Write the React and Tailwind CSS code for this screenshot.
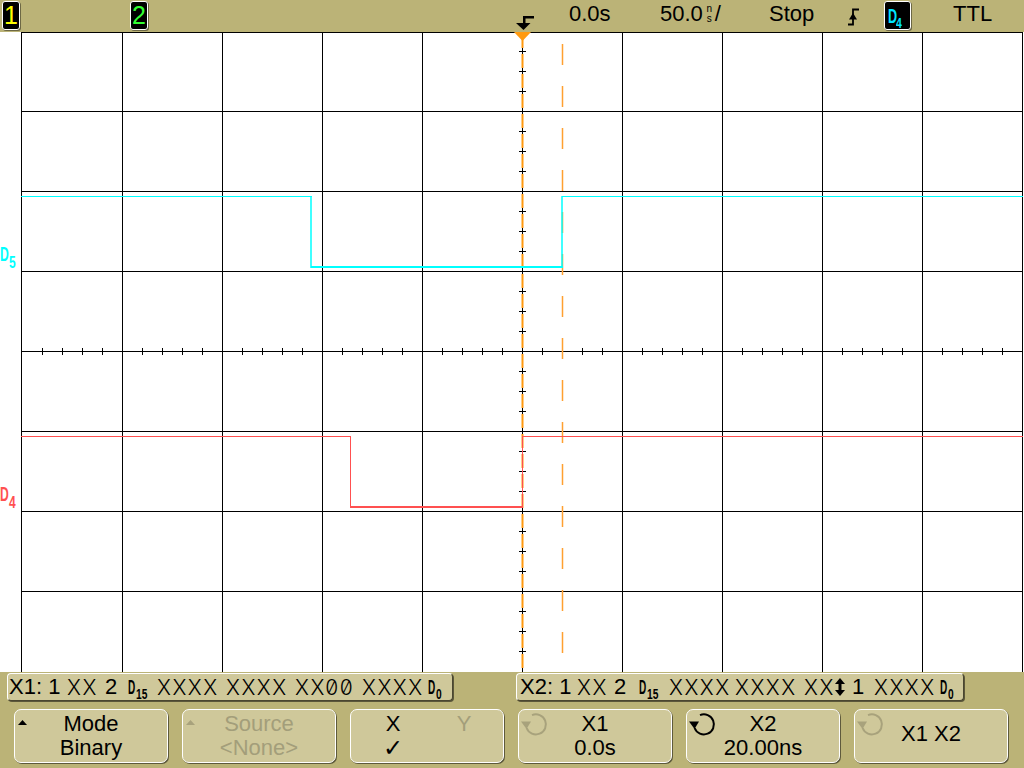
import React from 'react';

// scope display: top status bar, graticule with two digital traces, cursor bars and softkeys
const vLines = [21.5, 122.5, 222.5, 322.5, 422.5, 522.5, 622.5, 722.5, 822.5, 922.5, 1022.5];
const hLines = [32.5, 111.5, 191.5, 271.5, 351.5, 431.5, 511.5, 591.5];
const hTicks = Array.from({ length: 49 }, (_, i) => 42 + i * 20);
const vTicks = Array.from({ length: 31 }, (_, i) => 51 + i * 20);

const Badge = ({ children, color, className = '' }) => (
  <div className={`w-[18px] h-[29px] mt-[1px] rounded-[3px] border border-white bg-black shadow-[1px_1px_0_#6d6845] flex items-center justify-center text-[25px] leading-none ${color} ${className}`}>
    {children}
  </div>
);

// narrow pixel style "D" with subscript
const DSub = ({ n, subW = 12, className = '', dSize = 'text-[20px]', sSize = 'text-[15px]', dScale = 'scale-x-[0.5]', sScale = 'scale-x-[0.68]' }) => (
  <span className={`inline-flex items-end font-bold leading-none font-['Liberation_Sans',Arial,sans-serif] ${className}`}>
    <span className="inline-block w-[8px]">
      <span className={`inline-block origin-left ${dScale} ${dSize}`}>D</span>
    </span>
    <span className="inline-block translate-y-[5px]" style={{ width: subW }}>
      <span className={`inline-block origin-left ${sScale} ${sSize}`}>{n}</span>
    </span>
  </span>
);

const Thin = ({ children }) => (
  <span className="font-['Inter','DejaVu_Sans',sans-serif] font-light text-black tracking-[1.5px] text-[21px] [font-feature-settings:'zero']">{children}</span>
);

const UpDown = () => (
  <svg width="10" height="18" viewBox="0 0 10 18">
    <rect x="3.5" y="4" width="3" height="10" fill="black" />
    <polygon points="0,6 10,6 5,0" fill="black" />
    <polygon points="0,12 10,12 5,18" fill="black" />
  </svg>
);

const XBar = ({ cells, className = '', pl }) => (
  <div className={`h-[28px] rounded-[4px] border border-[#4a4630] border-t-white border-l-white shadow-[1px_1px_0_#5b573a] bg-[#cfc89a] flex items-center text-[22px] leading-none text-black ${className}`} style={{ paddingLeft: pl }}>
    {cells.map(([w, c], i) => (
      <div key={i} className="flex items-center shrink-0" style={{ width: w }}>{c}</div>
    ))}
  </div>
);

const Tri = ({ dim }) => (
  <svg width="10" height="7" viewBox="0 0 10 7" className="ml-[3px] mt-[9px]">
    <polygon points="0,6 9,6 4.5,1" fill={dim ? '#a8a27c' : 'black'} />
  </svg>
);

const Knob = ({ dim }) => {
  const c = dim ? '#a8a27c' : 'black';
  return (
    <svg width="30" height="26" viewBox="0 0 30 26" className="ml-[1px] mt-[2px]">
      <path d="M12 3.2 A10 10 0 1 1 6.6 16" fill="none" stroke={c} strokeWidth="2" />
      <polygon points="1,9.5 11,9.5 6.5,17" fill={c} />
    </svg>
  );
};

const SoftKey = ({ icon, children }) => (
  <div className="w-[154px] h-[54px] shrink-0 rounded-[7px] border border-white bg-[#cfc89a] shadow-[1px_1px_0_#5e5a3c] grid grid-cols-[30px_1fr_30px]">
    <div>{icon}</div>
    <div className="flex flex-col items-center justify-center text-[22px] leading-[24px]">{children}</div>
    <div />
  </div>
);

const Chart = () => (
  <svg width="1024" height="640" viewBox="0 32 1024 640" className="block bg-white">
    {vLines.map((x) => (
      <line key={'v' + x} x1={x} x2={x} y1="32" y2="672" stroke="black" strokeWidth="1" />
    ))}
    {hLines.map((y) => (
      <line key={'h' + y} x1="21" x2="1023" y1={y} y2={y} stroke="black" strokeWidth="1" />
    ))}
    {hTicks.map((x) => (
      <line key={'ht' + x} x1={x + 0.5} x2={x + 0.5} y1="348" y2="355" stroke="black" />
    ))}
    {vTicks.map((y) => (
      <line key={'vt' + y} x1="519" x2="526" y1={y + 0.5} y2={y + 0.5} stroke="black" />
    ))}

    {/* cursors */}
    <line x1="522.5" x2="522.5" y1="34" y2="672" stroke="#ff9a10" strokeWidth="2" strokeDasharray="14 6" />
    <line x1="562.5" x2="562.5" y1="44" y2="672" stroke="#ffa030" strokeWidth="1.5" strokeDasharray="21 21" />
    <polygon points="514,32 531,32 522.5,41" fill="#ff9a10" />

    {/* D5 trace */}
    <g stroke="#00ffff" fill="none">
      <line x1="21" x2="312" y1="196.5" y2="196.5" />
      <line x1="311" x2="311" y1="196" y2="268" strokeWidth="1.5" />
      <line x1="311" x2="563" y1="267" y2="267" strokeWidth="2" />
      <line x1="562" x2="562" y1="196" y2="268" strokeWidth="1.5" />
      <line x1="562" x2="1023" y1="196.5" y2="196.5" />
    </g>
    {/* D4 trace */}
    <g stroke="#ff5050" fill="none">
      <line x1="21" x2="351" y1="436.5" y2="436.5" />
      <line x1="350.5" x2="350.5" y1="436" y2="508" />
      <line x1="350" x2="523" y1="507" y2="507" strokeWidth="2" />
      <line x1="522.5" x2="522.5" y1="436" y2="508" />
      <line x1="522" x2="1023" y1="436.5" y2="436.5" />
    </g>

    <g fontFamily="Liberation Sans, Arial, sans-serif" fontWeight="bold">
      <text transform="translate(0 261) scale(0.58 1)" fontSize="21" fill="#00ffff">D</text>
      <text transform="translate(9 268) scale(0.75 1)" fontSize="16" fill="#00ffff">5</text>
      <text transform="translate(0 501) scale(0.58 1)" fontSize="21" fill="#ff5050">D</text>
      <text transform="translate(9 508) scale(0.75 1)" fontSize="16" fill="#ff5050">4</text>
    </g>
  </svg>
);

export default function App() {
  const x1Cells = [
    [58, 'X1: 1'],
    [38, <Thin>XX</Thin>],
    [23, '2'],
    [29, <DSub n="15" />],
    [69, <Thin>XXXX</Thin>],
    [69, <Thin>XXXX</Thin>],
    [67, <Thin>XX00</Thin>],
    [66, <Thin>XXXX</Thin>],
    [24, <DSub n="0" subW={8} />],
  ];
  const x2Cells = [
    [57, 'X2: 1'],
    [37, <Thin>XX</Thin>],
    [25, '2'],
    [30, <DSub n="15" />],
    [66, <Thin>XXXX</Thin>],
    [69, <Thin>XXXX</Thin>],
    [31, <Thin>XX</Thin>],
    [17, <UpDown />],
    [22, '1'],
    [66, <Thin>XXXX</Thin>],
    [24, <DSub n="0" subW={8} />],
  ];

  return (
    <div className="w-[1024px] h-[768px] overflow-hidden bg-white font-['Liberation_Sans',Arial,sans-serif] text-black">
      {/* status bar */}
      <div className="h-[32px] bg-[#bbb377] flex items-start text-[22px] leading-none">
        <Badge className="ml-[2px]" color="text-[#ffff00]">1</Badge>
        <Badge className="ml-[110px]" color="text-[#33ff33]">2</Badge>
        <svg width="22" height="32" viewBox="0 0 22 32" className="ml-[366px] shrink-0">
          <rect x="9" y="16" width="11" height="2.5" fill="black" />
          <rect x="9" y="16" width="2.5" height="8" fill="black" />
          <polygon points="2,23 16.5,23 9.5,30" fill="black" />
        </svg>
        <div className="ml-[33px] w-[91px] mt-[3px] shrink-0">0.0s</div>
        <div className="w-[109px] mt-[3px] shrink-0 flex items-start">
          <span>50.0</span>
          <span className="flex flex-col items-center text-[10px] leading-[10px] mt-[1px] ml-[2px] mr-[1px] w-[9px]">
            <span>n</span>
            <span>s</span>
          </span>
          <span>/</span>
        </div>
        <div className="w-[78px] mt-[3px] shrink-0">Stop</div>
        <svg width="16" height="32" viewBox="0 0 16 32" className="shrink-0">
          <path d="M1 24.5 H6 V9.5 H12" fill="none" stroke="black" strokeWidth="1.8" />
          <polygon points="2,19.5 10,19.5 6,13" fill="black" />
        </svg>
        <div className="ml-[21px] w-[27px] h-[29px] mt-[1px] shrink-0 rounded-[3px] border border-white bg-black shadow-[1px_1px_0_#6d6845] text-[#00e5ff] flex items-start pl-[3px] pt-[3px]">
          <DSub n="4" subW={8} dSize="text-[21px]" sSize="text-[14px]" dScale="scale-x-[0.6]" sScale="scale-x-[0.75]" />
        </div>
        <div className="ml-[42px] mt-[3px] shrink-0">TTL</div>
      </div>

      <Chart />

      {/* cursor readouts + softkeys */}
      <div className="h-[96px] bg-[#bbb377] pt-[1px]">
        <div className="flex h-[28px] pl-[7px]">
          <XBar cells={x1Cells} className="w-[446px]" pl={1} />
          <XBar cells={x2Cells} className="w-[448px] ml-[63px]" pl={3} />
        </div>
        <div className="flex gap-[14px] pl-[14px] mt-[8px]">
          <SoftKey icon={<Tri />}>
            <span>Mode</span>
            <span>Binary</span>
          </SoftKey>
          <SoftKey icon={<Tri dim />}>
            <span className="text-[#a39e7a]">Source</span>
            <span className="text-[#a39e7a]">&lt;None&gt;</span>
          </SoftKey>
          <div className="w-[154px] h-[54px] shrink-0 rounded-[7px] border border-white bg-[#cfc89a] shadow-[1px_1px_0_#5e5a3c] grid grid-cols-2 text-[22px] leading-[24px]">
            <div className="flex flex-col items-center justify-center pl-[8px]">
              <span>X</span>
              <span className="font-['DejaVu_Sans',sans-serif] text-[24px]">✓</span>
            </div>
            <div className="flex flex-col items-center pt-[2px] pr-[2px]">
              <span className="text-[#a39e7a]">Y</span>
            </div>
          </div>
          <SoftKey icon={<Knob dim />}>
            <span>X1</span>
            <span>0.0s</span>
          </SoftKey>
          <SoftKey icon={<Knob />}>
            <span>X2</span>
            <span>20.00ns</span>
          </SoftKey>
          <SoftKey icon={<Knob dim />}>
            <span className="mb-[4px]">X1 X2</span>
          </SoftKey>
        </div>
      </div>
    </div>
  );
}
